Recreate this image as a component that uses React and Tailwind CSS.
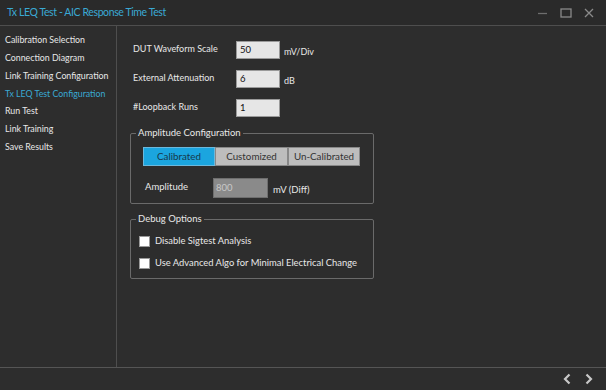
import React from "react";

const font = { fontFamily: 'Lato, "Noto Sans", sans-serif' };

function Input({ value }) {
  return (
    <div className="h-[18px] w-[44px] bg-[#e6e6e6] border border-[#9a9a9a] text-[9.5px] text-[#111] pl-[3px] flex items-center">
      {value}
    </div>
  );
}

function Group({ title, className = "", children }) {
  return (
    <div className={`relative border border-[#6a6a6a] rounded-[2px] w-[244px] ${className}`}>
      <span className="absolute left-[5px] top-[-7px] px-[2px] bg-[#2d2d2d] text-[9.5px] leading-[12px]">{title}</span>
      {children}
    </div>
  );
}

export default function App() {
  const nav = [
    "Calibration Selection",
    "Connection Diagram",
    "Link Training Configuration",
    "Tx LEQ Test Configuration",
    "Run Test",
    "Link Training",
    "Save Results",
  ];
  return (
    <div className="w-[606px] h-[390px] bg-[#2d2d2d] flex flex-col text-[#e8e8e8] overflow-hidden" style={font}>
      {/* title bar */}
      <div className="h-[26px] flex items-center justify-between border-b border-[#4e4e4e] bg-[#2a2a2a]">
        <span className="pl-[7px] text-[10.5px] tracking-[-0.4px] text-[#3aa9d4]">Tx LEQ Test - AIC Response Time Test</span>
        <div className="flex items-center gap-[9px] pr-[10px]">
          <svg width="14" height="12" viewBox="0 0 14 12"><line x1="2" y1="6.5" x2="11" y2="6.5" stroke="#6e6e6e" strokeWidth="1.3" /></svg>
          <svg width="14" height="12" viewBox="0 0 14 12"><rect x="2" y="2" width="10" height="8" fill="none" stroke="#8a8a8a" strokeWidth="1.3" /></svg>
          <svg width="14" height="12" viewBox="0 0 14 12"><path d="M3 2 L11 10 M11 2 L3 10" stroke="#8a8a8a" strokeWidth="1.3" /></svg>
        </div>
      </div>
      <div className="flex flex-1 border-b border-[#555]">
        {/* sidebar */}
        <div className="w-[117px] border-r border-[#4e4e4e] pt-[5px] flex flex-col">
          {nav.map((n) => (
            <div key={n} className={`h-[17.8px] pl-[5px] text-[8.8px] flex items-center whitespace-nowrap ${n === "Tx LEQ Test Configuration" ? "text-[#3aa9d4]" : "text-[#e8e8e8]"}`}>
              {n}
            </div>
          ))}
        </div>
        {/* content */}
        <div className="flex-1 pl-[13px] pt-[15px] text-[9px]">
          <div className="flex flex-col gap-[11px] ml-[3px]">
            <div className="flex items-center">
              <span className="w-[103px] mt-[-3px]">DUT Waveform Scale</span>
              <Input value="50" />
              <span className="ml-[4px] mt-[4px]">mV/Div</span>
            </div>
            <div className="flex items-center">
              <span className="w-[103px] mt-[-3px]">External Attenuation</span>
              <Input value="6" />
              <span className="ml-[4px] mt-[4px]">dB</span>
            </div>
            <div className="flex items-center">
              <span className="w-[103px] mt-[-3px]">#Loopback Runs</span>
              <Input value="1" />
            </div>
          </div>

          {/* Amplitude Configuration */}
          <Group title="Amplitude Configuration" className="mt-[16px] h-[71px]">
            <div className="flex mt-[13px] ml-[12px] text-[9.8px]">
              <div className="w-[72px] h-[19px] bg-[#1ba5df] text-[#17384a] flex items-center justify-center border border-[#6bb8dc]">Calibrated</div>
              <div className="w-[73px] h-[19px] bg-[#bdbdbd] text-[#333] flex items-center justify-center border border-[#888]">Customized</div>
              <div className="w-[72px] h-[19px] bg-[#bdbdbd] text-[#333] flex items-center justify-center border border-[#888]">Un-Calibrated</div>
            </div>
            <div className="flex items-center mt-[12px] ml-[14px] text-[9.5px]">
              <span className="w-[68px] mt-[-2px]">Amplitude</span>
              <div className="w-[55px] h-[20px] bg-[#8a8a8a] border border-[#6e6e6e] text-[#c8c8c8] pl-[2px] flex items-center">800</div>
              <span className="ml-[5px] mt-[5px]">mV (Diff)</span>
            </div>
          </Group>

          {/* Debug Options */}
          <Group title="Debug Options" className="mt-[15px] h-[60px]">
            <div className="flex flex-col gap-[8px] mt-[14px] ml-[8px]">
              <div className="flex items-center gap-[5px]">
                <div className="w-[11px] h-[11px] bg-white border border-[#999]" />
                <span className="text-[9.4px]">Disable Sigtest Analysis</span>
              </div>
              <div className="flex items-center gap-[5px]">
                <div className="w-[11px] h-[11px] bg-white border border-[#999]" />
                <span className="text-[9.4px] whitespace-nowrap">Use Advanced Algo for Minimal Electrical Change</span>
              </div>
            </div>
          </Group>
        </div>
      </div>
      {/* bottom bar */}
      <div className="h-[22px] flex items-center justify-end gap-[12px] pr-[12px]">
        <svg width="10" height="12" viewBox="0 0 10 12"><path d="M7.5 1.5 L3 6 L7.5 10.5" fill="none" stroke="#c8c8c8" strokeWidth="2.2" /></svg>
        <svg width="10" height="12" viewBox="0 0 10 12"><path d="M2.5 1.5 L7 6 L2.5 10.5" fill="none" stroke="#c8c8c8" strokeWidth="2.2" /></svg>
      </div>
    </div>
  );
}
